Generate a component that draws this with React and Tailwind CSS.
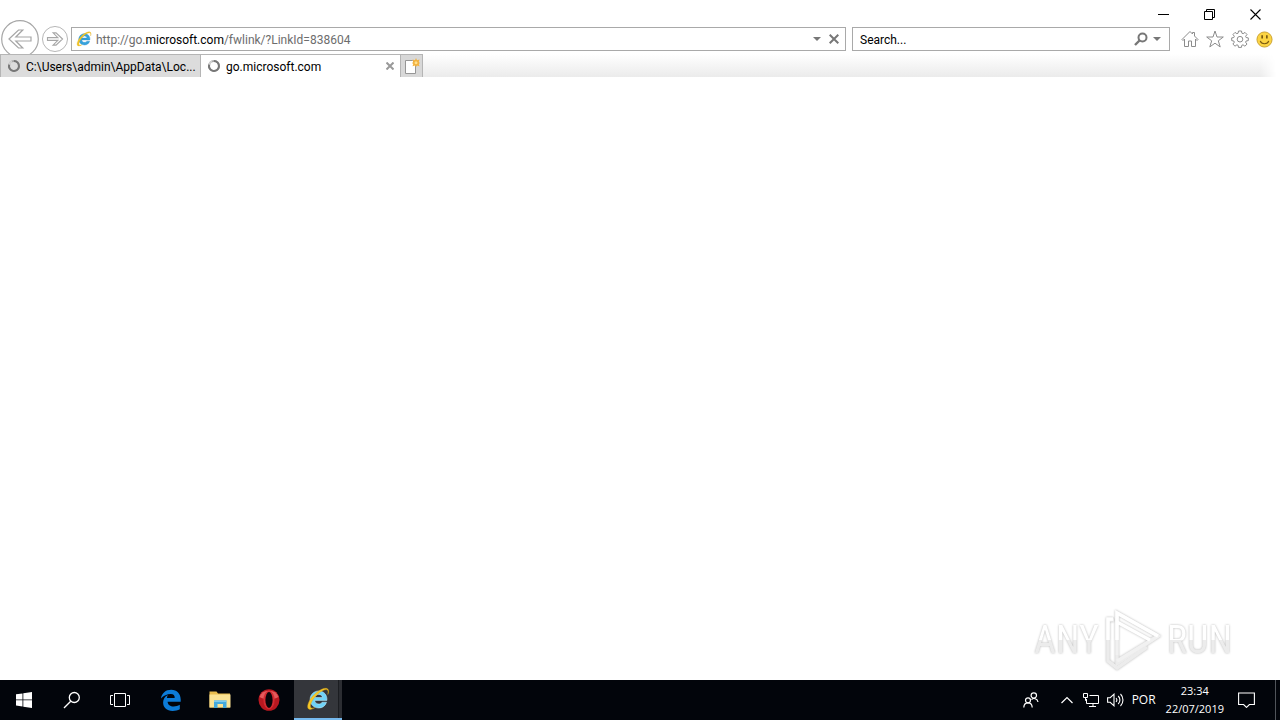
import React from "react";

function IELogo({ className, glow }) {
  return (
    <svg viewBox="0 0 24 24" className={className} aria-hidden="true">
      <path
        d="M20.5 15.2h-4.3c-.7 1.2-1.900 1.800-3.400 1.800-2.300 0-3.900-1.400-4.100-3.600h12.200c.6-5.300-2.900-9.400-8.200-9.400-4.900 0-8.600 3.600-8.600 8.500s3.600 8.500 8.700 8.500c3.700 0 6.600-2.100 7.700-5.800zM8.800 10.500c.4-1.900 1.900-3.100 3.900-3.100s3.500 1.200 3.700 3.100z"
        fill={glow ? "#6fd3f7" : "#36a3dc"}
        stroke={glow ? "#c8f1ff" : "#2585c4"}
        strokeWidth=".5"
      />
      <path
        d="M21.800 7.500c1.400-3.200.9-5.900-1.600-6.200C15.500.8 7.200 7 3.500 13.700c-2.600 4.800-2.500 8.700.7 8.700 1.300 0 3-.7 4.700-1.800-2.700 1.100-4.500.7-4.500-1.600 0-3 3.200-8.200 7.500-12 4-3.500 8.100-5.200 9.500-4 .9.800.9 2.500.4 4.500z"
        fill="#f6c827"
        stroke="#d9a414"
        strokeWidth=".4"
      />
    </svg>
  );
}

function Spinner() {
  return (
    <svg viewBox="0 0 14 14" className="size-3.5 shrink-0" fill="none" strokeWidth="2" aria-hidden="true">
      <circle cx="7" cy="7" r="5" stroke="#a8a8a8" />
      <path d="M7 2a5 5 0 1 1-4.800 3.500" stroke="#777" />
      <path d="M2.200 5.500A5 5 0 0 1 5 2.400" stroke="#d2d2d2" />
    </svg>
  );
}

function Caret() {
  return (
    <svg viewBox="0 0 8 4" className="h-1 w-2" aria-hidden="true">
      <path d="M0 0h8L4 4z" fill="#777" />
    </svg>
  );
}

function NavArrow({ className, flip }) {
  return (
    <svg viewBox="0 0 38 38" className={className} fill="none" stroke="#a6a6a6" aria-hidden="true">
      <circle cx="19" cy="19" r="18.300" fill="#fff" strokeWidth="1.200" />
      <path
        d="M8 19l9.500-9h4.300l-7 7H30v4H14.800l7 7h-4.300z"
        strokeWidth={flip ? "1.600" : "1.200"}
        transform={flip ? "translate(38 0) scale(-1 1)" : undefined}
      />
    </svg>
  );
}

function WindowControls() {
  return (
    <div className="flex h-7 items-center justify-end gap-[35px] pr-[19px]">
      <button aria-label="Minimize">
        <svg viewBox="0 0 11 11" className="size-[11px]" stroke="#000">
          <path d="M0 5.500h11" />
        </svg>
      </button>
      <button aria-label="Restore">
        <svg viewBox="0 0 11 11" className="size-[11px]" fill="none" stroke="#000">
          <path d="M.5 2.500h8v8h-8zM2.500 2.500v-2h8v8h-2" />
        </svg>
      </button>
      <button aria-label="Close">
        <svg viewBox="0 0 11 11" className="size-[11px]" stroke="#000" strokeWidth="1.100">
          <path d="M.5.500l10 10M10.500.500l-10 10" />
        </svg>
      </button>
    </div>
  );
}

function Toolbar() {
  return (
    <div className="-mt-px flex h-6 items-center pl-px pr-[7px]">
      <button aria-label="Back" className="shrink-0">
        <NavArrow className="size-[38px]" />
      </button>
      <button aria-label="Forward" className="ml-[3px] shrink-0">
        <NavArrow className="size-[26px]" flip />
      </button>
      <div className="ml-[3px] flex h-6 grow items-center border border-[#a9a9a9] bg-white pl-1 pr-1.5">
        <IELogo className="size-4 shrink-0" />
        <div
          role="textbox"
          aria-label="Address"
          tabIndex={0}
          className="ml-1 grow whitespace-nowrap pt-0.5 text-[12px] leading-4 text-[#6d6d6d]"
        >
          http://go.<span className="text-black">microsoft.com</span>/fwlink/?LinkId=838604
        </div>
        <button aria-label="Show address list">
          <Caret />
        </button>
        <button aria-label="Stop" className="ml-2">
          <svg viewBox="0 0 10 10" className="size-[10px]" stroke="#777" strokeWidth="2">
            <path d="M.7.700l8.600 8.600M9.300.700L.7 9.300" />
          </svg>
        </button>
      </div>
      <div className="ml-1.5 flex h-6 w-[318px] shrink-0 items-center border border-[#a9a9a9] bg-white pl-[7px] pr-2">
        <input
          aria-label="Search"
          placeholder="Search..."
          className="min-w-0 grow bg-transparent pt-0.5 text-[12px] leading-4 outline-none placeholder:text-black"
        />
        <button aria-label="Run search">
          <svg viewBox="0 0 14 14" className="size-3.5" fill="none" stroke="#777" aria-hidden="true">
            <circle cx="8.500" cy="5.500" r="4" strokeWidth="2" />
            <path d="M5.500 8.500L1 13" strokeWidth="2.400" />
          </svg>
        </button>
        <button aria-label="Search providers" className="ml-[5px]">
          <Caret />
        </button>
      </div>
      <div className="ml-[11px] flex shrink-0 items-center gap-[7px]">
        <button aria-label="Home">
          <svg viewBox="0 0 18 18" className="size-[18px]" fill="none" stroke="#8c8c8c">
            <path d="M1 9.500L9 1.500l2.500 2.500V2.500h2V6L17 9.500l-1 1-1.500-1.500v7.500h-4V11h-3v5.500h-4V9L2 10.500z" />
          </svg>
        </button>
        <button aria-label="Favorites">
          <svg viewBox="0 0 18 18" className="size-[18px]" fill="none" stroke="#8c8c8c">
            <path d="M9 1l2 6h6.300l-5 3.800 1.900 6.100L9 13.200l-5.200 3.700 1.900-6.100L.7 7H7z" />
          </svg>
        </button>
        <button aria-label="Tools">
          <svg viewBox="0 0 18 18" className="size-[18px]" fill="none" stroke="#8c8c8c">
            <path d="M7.500 1h3l.4 2.200 1.200.5L14 2.400 16 4.500l-1.400 1.800.5 1.200 2.200.4v2.700l-2.200.4-.5 1.200 1.400 1.900-2.100 2.100-1.900-1.400-1.200.5-.4 2.100h-2.900l-.4-2.100-1.200-.5-1.900 1.400-2.100-2.100 1.400-1.900-.5-1.200-2.100-.4V7.900l2.100-.4.5-1.200L2 4.500l2-2.100 1.900 1.300 1.200-.5z" />
            <circle cx="9" cy="9.200" r="2.800" />
          </svg>
        </button>
        <button aria-label="Send a smile">
          <svg viewBox="0 0 18 18" className="size-[17px]" aria-hidden="true">
            <circle cx="9" cy="9" r="8" fill="#fcd443" stroke="#c9a031" />
            <path d="M4.500 10.500c1.200 4 7.800 4 9 0" fill="none" stroke="#7a5a10" strokeWidth="1.200" />
            <path d="M6.500 4.500v3.500M11.500 4.500v3.500" stroke="#6a4c0c" strokeWidth="1.600" />
          </svg>
        </button>
      </div>
    </div>
  );
}

function TabStrip() {
  return (
    <div className="relative z-10 mt-[3px] flex h-[23px] bg-white">
      <button className="flex w-[201px] items-center gap-[5px] border-x border-t border-[#b5b5b5] bg-[#dcdcdc] pl-1.5 text-[12px] leading-4">
        <Spinner />
        <span className="whitespace-nowrap pt-0.5">C:\Users\admin\AppData\Loc...</span>
      </button>
      <div className="flex w-[199px] items-center border-t border-[#b5b5b5] bg-white pl-1.5 pr-1.5">
        <button className="flex grow items-center gap-[5px] text-[12px] leading-4">
          <Spinner />
          <span className="pt-0.5">go.microsoft.com</span>
        </button>
        <button aria-label="Close tab">
          <svg viewBox="0 0 8 8" className="size-2" stroke="#999" strokeWidth="2">
            <path d="M.5.500l7 7M7.500.500l-7 7" />
          </svg>
        </button>
      </div>
      <button
        aria-label="New tab"
        className="flex w-[23px] items-center justify-center border border-b-0 border-[#b5b5b5] bg-[#d8d8d8]"
      >
        <svg viewBox="0 0 16 16" className="size-4" aria-hidden="true">
          <path d="M1.500 2.500h7l3 3v10h-10z" fill="#fff" stroke="#969696" />
          <path d="M12 0l1 2.300L15.500 1.500 14.700 4l1.300 1-1.300 1 .8 2.300L13 7.500 12 9l-1-1.500-2.500.8L9.300 6 8 5l1.300-1-.8-2.500 2.500.8z" fill="#f3b13c" />
          <circle cx="12" cy="4.700" r="1.500" fill="#ffdf8c" />
        </svg>
      </button>
      <div className="mr-1 grow bg-linear-to-b from-white to-[#ebebeb] [mask-image:linear-gradient(to_left,transparent,black_16px)]" />
    </div>
  );
}

const watermarkText = "bg-linear-to-b from-white from-50% to-[#ececec] to-50% bg-clip-text text-transparent";

function Watermark() {
  return (
    <div className="flex items-center gap-1 font-['Roboto_Condensed','Open_Sans_Condensed','Liberation_Sans',sans-serif] text-[38px] leading-10 [filter:drop-shadow(0_0_1px_#b8b8b8)]">
      <span className={watermarkText}>ANY</span>
      <svg viewBox="0 0 60 64" className="h-16 w-[60px]" fill="none" strokeWidth="3.500" aria-hidden="true">
        <path d="M44 39L14 60l-9-7V12h6" stroke="#ececec" />
        <path d="M14 47v9l41-28" stroke="#ececec" />
        <path d="M14 47V5l41 23-41 25" stroke="#f1f1f1" />
        <path d="M5 32V11h5M14 32V5l41 23M14 14l33 18" stroke="#fff" />
      </svg>
      <span className={watermarkText}>RUN</span>
    </div>
  );
}

function Taskbar() {
  return (
    <footer className="flex h-10 items-center bg-[#02050b] font-['Open_Sans','Noto_Sans',sans-serif] text-white">
      <button aria-label="Start" className="flex h-10 w-12 items-center justify-center">
        <svg viewBox="0 0 16 16" className="size-4" fill="#fff">
          <path d="M0 2.300L6.500 1.400v6.100H0zM7.300 1.300L16 0v7.500H7.300zM0 8.300h6.500v6.200L0 13.600zM7.300 8.300H16V16l-8.700-1.300z" />
        </svg>
      </button>
      <button aria-label="Search Windows" className="flex h-10 w-12 items-center justify-center">
        <svg viewBox="0 0 18 18" className="size-[18px]" fill="none" stroke="#fff" strokeWidth="1.300">
          <circle cx="11.300" cy="6.500" r="5" />
          <path d="M7.700 10.200L1 17" />
        </svg>
      </button>
      <button aria-label="Task view" className="flex h-10 w-12 items-center justify-center">
        <svg viewBox="0 0 20 14" className="h-3.5 w-5" fill="none" stroke="#fff">
          <path d="M4.500.500h11v13h-11zM3 2.500H.5v9H3M17 2.500h2.500v9H17" />
        </svg>
      </button>
      <button aria-label="Microsoft Edge" className="ml-[3px] flex h-10 w-12 items-center justify-center">
        <svg viewBox="0 0 24 24" className="size-6" fill="#0c7cd8">
          <path d="M2 10.600C2.700 5.200 6.600 1.800 12.200 1.800c5.800 0 9.500 4 9.500 9.700v2.300H8.600c.2 3.200 2.700 4.700 6 4.700 2.300 0 4.300-.6 6.200-1.700v4.500c-2 1.100-4.500 1.600-7.200 1.600-5.900 0-9.500-3.200-9.500-8.300 0-3.500 1.800-6.100 4.800-7.600-.6 1-.9 1.900-1 3h7.800c.1-2.500-1.100-4-3.900-4C8 6 4.500 7.500 2 10.600z" />
        </svg>
      </button>
      <button aria-label="File Explorer" className="flex h-10 w-[49px] items-center justify-center">
        <svg viewBox="0 0 24 20" className="h-5 w-6">
          <path d="M1.500 1.500h7l1.500 2h12v14h-20.500z" fill="#e9bd4e" />
          <path d="M1.500 4.500h21v13h-21z" fill="#fbe394" />
          <path d="M6 10.500h12.500v7.500h-3.500v-4h-5.500v4H6z" fill="#44a9dc" />
          <path d="M6 12h12.500v-1.500H6z" fill="#7fcbee" />
        </svg>
      </button>
      <button aria-label="Opera" className="flex h-10 w-[49px] items-center justify-center">
        <svg viewBox="0 0 24 24" className="size-6">
          <ellipse cx="12" cy="12" rx="10.500" ry="10.800" fill="#b81820" />
          <path d="M2.500 9a10 9 0 0 1 19 0c-5 3-14 3-19 0z" fill="#e35a5c" />
          <ellipse cx="12" cy="12" rx="5.600" ry="9.300" fill="#d42b31" />
          <ellipse cx="12" cy="12" rx="3.600" ry="7.900" fill="#08050a" />
        </svg>
      </button>
      <button
        aria-label="Internet Explorer"
        className="ml-px flex h-10 w-12 border-b-2 border-[#76b9ed] bg-[#34363b]"
      >
        <span className="flex h-full grow items-center justify-center pl-1">
          <IELogo className="size-6" glow />
        </span>
        <span className="h-full w-1 border-l border-[#1b1d21] bg-[#2b2d32]" />
      </button>

      <div className="ml-auto flex h-10 items-center text-[12px] leading-4">
        <button aria-label="People">
          <svg viewBox="0 0 16 16" className="size-4" fill="none" stroke="#fff" strokeWidth="1.200">
            <circle cx="10.800" cy="3.500" r="2.700" />
            <path d="M8.500 7.700c1.800-2.200 6-1.200 6.500 2.300" />
            <circle cx="5" cy="8.300" r="2.500" />
            <path d="M.8 15.500c.2-6.200 8.200-6.200 8.400 0" />
          </svg>
        </button>
        <button aria-label="Show hidden icons" className="ml-[22px]">
          <svg viewBox="0 0 12 8" className="h-2 w-3" fill="none" stroke="#fff" strokeWidth="1.200">
            <path d="M.5 7L6 1.500 11.500 7" />
          </svg>
        </button>
        <button aria-label="Network" className="ml-2.5">
          <svg viewBox="0 0 16 14" className="h-3.5 w-4" fill="none" stroke="#fff">
            <path d="M6.500 2.500h9v8h-12V6M10 10.500v3M6 13.500h7M.5.500h4v4h-4zM2.500 5v2.500H4" />
          </svg>
        </button>
        <button aria-label="Volume" className="ml-2">
          <svg viewBox="0 0 17 14" className="h-3.5 w-[17px]" fill="none" stroke="#fff" strokeWidth="1.100">
            <path d="M.6 4.700h2.600L7 1.200v11.600L3.200 9.300H.6zM9 5a3 3 0 0 1 0 4M11.200 3a5.500 5.500 0 0 1 0 8M13.500 1a8.500 8.500 0 0 1 0 12" />
          </svg>
        </button>
        <button className="ml-2">POR</button>
        <button className="ml-2.5 flex h-10 flex-col items-center justify-center gap-0.5 text-[11px]">
          <span>23:34</span>
          <span>22/07/2019</span>
        </button>
        <button aria-label="Notifications" className="ml-3.5">
          <svg viewBox="0 0 17 16" className="h-4 w-[17px]" fill="none" stroke="#fff" strokeWidth="1.100">
            <path d="M.6 1h15.800v11.500h-5L8.500 15.400 5.600 12.500h-5z" />
          </svg>
        </button>
        <button aria-label="Show desktop" className="ml-5 h-10 w-[5px] border-l border-[#50545a]" />
      </div>
    </footer>
  );
}

export default function App() {
  return (
    <div className="flex min-h-screen flex-col bg-white font-['Roboto','Open_Sans',sans-serif] text-black">
      <header>
        <WindowControls />
        <Toolbar />
        <TabStrip />
      </header>
      <main className="flex grow items-end justify-end pr-12 pb-2">
        <Watermark />
      </main>
      <Taskbar />
    </div>
  );
}
